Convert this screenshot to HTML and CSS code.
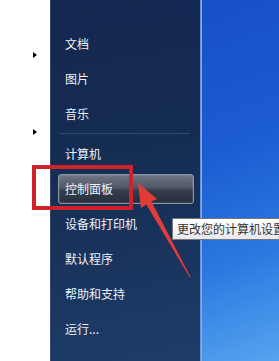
FILE: index.html
```html
<!DOCTYPE html>
<html lang="zh-CN">
<head>
<meta charset="utf-8">
<link rel="stylesheet" href="styles.css">
</head>
<body>
<div class="screen">
  <div class="left-pane">
    <span class="sub-arrow first"></span>
    <span class="sub-arrow second"></span>
  </div>
  <div class="panel">
    <div class="item"><span class="label">文档</span></div>
    <div class="item"><span class="label">图片</span></div>
    <div class="item"><span class="label">音乐</span></div>
    <div class="sep"></div>
    <div class="item"><span class="label">计算机</span></div>
    <div class="item"><span class="label hot">控制面板</span></div>
    <div class="item"><span class="label">设备和打印机</span></div>
    <div class="item"><span class="label">默认程序</span></div>
    <div class="item"><span class="label">帮助和支持</span></div>
    <div class="item"><span class="label">运行...</span></div>
  </div>
  <div class="edge"></div>
  <div class="desktop"></div>

  <div class="tooltip">更改您的计算机设置</div>

  <svg class="annot" width="279" height="361" viewBox="0 0 279 361">
    <rect x="34" y="167" width="97" height="41" fill="none" stroke="#d0222a" stroke-width="4"/>
    <polygon fill="#e23c36" points="138,183 141,208 146.4,204.6 189.6,277.2 190.4,276.8 151.4,201.6 157,199"/>
  </svg>
</div>
</body>
</html>
```
FILE: styles.css
```css
html, body {
  margin: 0;
  padding: 0;
}
body {
  width: 279px;
  height: 361px;
  overflow: hidden;
  font-family: "Noto Sans CJK SC", "Noto Sans", sans-serif;
}
.screen {
  position: relative;
  display: flex;
  width: 279px;
  height: 361px;
  overflow: hidden;
}
.left-pane {
  width: 50px;
  background: #ffffff;
  display: flex;
  flex-direction: column;
  padding-left: 33px;
  box-sizing: border-box;
}
.sub-arrow {
  width: 0;
  height: 0;
  border-top: 3px solid transparent;
  border-bottom: 3px solid transparent;
  border-left: 4px solid #000;
}
.sub-arrow.first { margin-top: 52px; }
.sub-arrow.second { margin-top: 71px; }

.panel {
  width: 150px;
  box-sizing: border-box;
  border-left: 1px solid #34476a;
  background: linear-gradient(170deg, #132850 0%, #152c52 40%, #1a355f 75%, #1e3c69 100%);
  display: flex;
  flex-direction: column;
  padding-top: 26px;
}
.item {
  height: 35px;
  display: flex;
  align-items: center;
  padding-left: 7px;
  padding-right: 6px;
}
.label {
  color: #eef2f8;
  font-size: 12px;
  line-height: 16px;
  padding-left: 7px;
  flex: 1;
}
.label.hot {
  height: 28px;
  line-height: 28px;
  border: 1px solid #8a93a3;
  border-radius: 3px;
  background: linear-gradient(180deg, #6e7585 0%, #505868 45%, #363d4c 55%, #262d3b 100%);
  box-shadow: inset 0 0 2px rgba(255,255,255,0.35);
  padding-left: 6px;
}
.sep {
  height: 5px;
  display: flex;
  align-items: center;
  padding: 0 10px 0 8px;
}
.sep::before {
  content: "";
  flex: 1;
  height: 1px;
  background: #2e4670;
}
.edge {
  width: 2px;
  background: linear-gradient(90deg, #5f86c8, #9bb6e4);
}
.desktop {
  flex: 1;
  background: linear-gradient(160deg, #1750c6 0%, #1c5cd2 40%, #2a78e0 70%, #55a4ef 100%);
}
.tooltip {
  position: absolute;
  left: 172px;
  top: 218px;
  width: 102px;
  height: 20px;
  border: 1px solid #767676;
  border-right: none;
  background: linear-gradient(180deg, #ffffff, #e6e8ef);
  color: #333;
  font-size: 12px;
  line-height: 20px;
  padding-left: 4px;
  white-space: nowrap;
  overflow: hidden;
}
.annot {
  position: absolute;
  left: 0;
  top: 0;
  pointer-events: none;
}
```
